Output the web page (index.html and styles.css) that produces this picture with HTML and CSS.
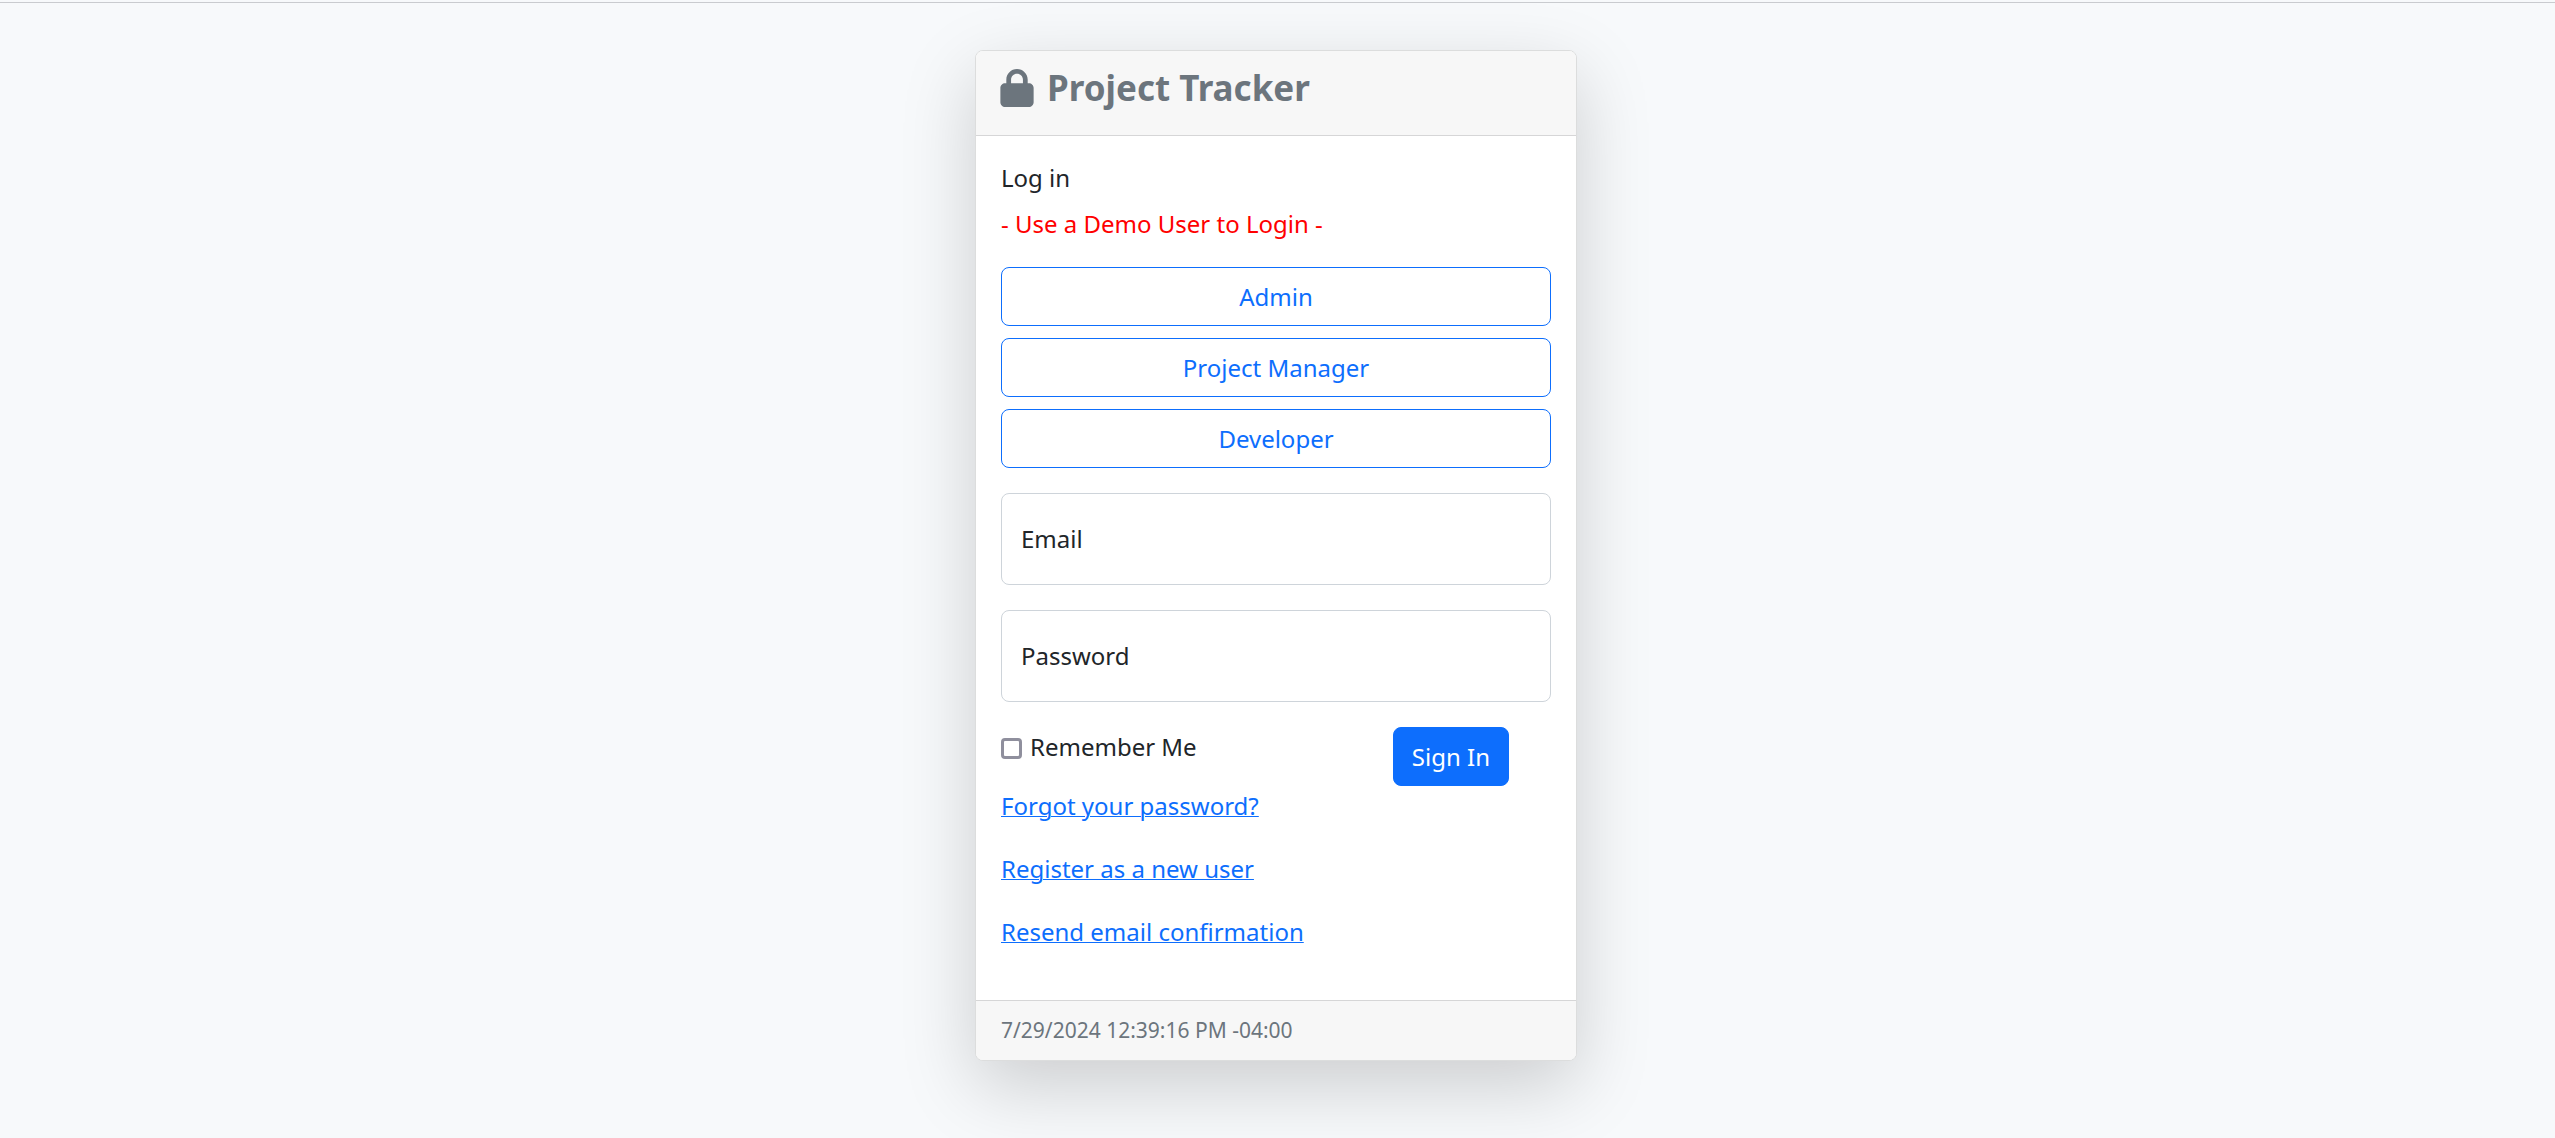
FILE: index.html
```html
<!DOCTYPE html>
<html lang="en">
<head>
  <meta charset="utf-8">
  <meta name="viewport" content="width=device-width, initial-scale=1">
  <title>Project Tracker</title>
  <link rel="stylesheet" href="styles.css">
</head>
<body>
  <main class="page">
    <section class="card">
      <header class="card-header">
        <svg class="lock" viewBox="0 0 448 512" aria-hidden="true"><path fill="currentColor" d="M144 144v48H304V144c0-44.200-35.800-80-80-80s-80 35.800-80 80zM80 192V144C80 64.500 144.500 0 224 0s144 64.500 144 144v48h16c35.300 0 64 28.700 64 64V448c0 35.300-28.700 64-64 64H64c-35.300 0-64-28.700-64-64V256c0-35.300 28.700-64 64-64H80z"/></svg>
        <h1 class="title">Project Tracker</h1>
      </header>
      <form class="card-body">
        <div class="intro">
          <p>Log in</p>
          <p class="notice">- Use a Demo User to Login -</p>
        </div>
        <div class="demo-users">
          <button class="btn btn-outline" type="button">Admin</button>
          <button class="btn btn-outline" type="button">Project Manager</button>
          <button class="btn btn-outline" type="button">Developer</button>
        </div>
        <div class="field">
          <input class="field-input" id="email" type="email" autocomplete="username">
          <label class="field-label" for="email">Email</label>
        </div>
        <div class="field">
          <input class="field-input" id="password" type="password" autocomplete="current-password">
          <label class="field-label" for="password">Password</label>
        </div>
        <div class="actions">
          <label class="remember"><input class="check" type="checkbox"><span>Remember Me</span></label>
          <button class="btn btn-primary" type="submit">Sign In</button>
        </div>
        <nav class="links">
          <a href="#forgot">Forgot your password?</a>
          <a href="#register">Register as a new user</a>
          <a href="#resend">Resend email confirmation</a>
        </nav>
      </form>
      <footer class="card-footer">7/29/2024 12:39:16 PM -04:00</footer>
    </section>
  </main>
</body>
</html>
```
FILE: styles.css
```css
* {
  box-sizing: border-box;
}

body {
  display: flex;
  flex-direction: column;
  min-height: 100vh;
  margin: 0;
  padding-top: 2px;
  background: #f7f9fb;
  color: #212529;
  font-family: "Noto Sans", sans-serif;
  font-size: 24px;
  line-height: 36px;
}

h1,
p {
  margin: 0;
}

.page {
  display: flex;
  flex: 1;
  align-items: flex-start;
  justify-content: center;
  padding: 47px 27px 47px 24px;
  border-top: 1px solid #c9cbcf;
}

.card {
  width: 100%;
  max-width: 602px;
  border: 1px solid #dcdddd;
  border-radius: 8px;
  background: #fff;
  box-shadow: 0 25px 75px rgba(0, 0, 0, 0.175);
}

.card-header {
  display: flex;
  align-items: flex-start;
  gap: 13px;
  padding: 12px 24px 22px;
  border-bottom: 1px solid #d6d6d7;
  border-radius: 7px 7px 0 0;
  background: #f7f7f7;
  color: #6c757d;
}

.lock {
  width: 34px;
  height: 38px;
  margin-top: 6px;
}

.title {
  font-size: 35px;
  font-weight: 700;
  line-height: 50px;
}

.card-body {
  padding: 24px 25px 50px;
}

.intro {
  display: flex;
  flex-direction: column;
  gap: 10px;
}

.notice {
  color: #f00;
}

.demo-users {
  display: flex;
  flex-direction: column;
  gap: 12px;
  margin: 25px 0;
}

.btn {
  height: 59px;
  padding: 0 18px;
  border: 1px solid #0d6efd;
  border-radius: 8px;
  font: inherit;
  cursor: pointer;
}

.btn-outline {
  background: transparent;
  color: #0d6efd;
}

.btn-primary {
  margin-right: 42px;
  background: #0d6efd;
  color: #fff;
}

.field {
  position: relative;
  margin-bottom: 25px;
}

.field-input {
  display: block;
  width: 100%;
  height: 92px;
  padding: 36px 19px 12px;
  border: 1px solid #ced4da;
  border-radius: 8px;
  background: #fff;
  color: inherit;
  font: inherit;
}

.field-label {
  position: absolute;
  top: 28px;
  left: 20px;
  pointer-events: none;
}

.field-input:focus + .field-label {
  top: 4px;
  font-size: 20px;
}

.actions {
  display: flex;
  align-items: flex-start;
  justify-content: space-between;
}

.remember {
  display: flex;
  align-items: center;
  gap: 8px;
  margin-top: 2px;
}

.check {
  appearance: none;
  width: 21px;
  height: 21px;
  margin: 2px 0 0;
  border: 3px solid #8f8f9d;
  border-radius: 4px;
  background: #fff;
}

.check:checked {
  border-color: #0d6efd;
  background: #0d6efd;
}

.links {
  display: flex;
  flex-direction: column;
  align-items: flex-start;
  gap: 27px;
  margin-top: 2px;
}

.links a {
  color: #0d6efd;
  text-decoration-thickness: 1px;
}

.card-footer {
  padding: 12px 25px;
  border-top: 1px solid #d6d6d7;
  border-radius: 0 0 7px 7px;
  background: #f7f7f7;
  color: #6c757d;
  font-size: 21px;
  line-height: 35px;
}
```
